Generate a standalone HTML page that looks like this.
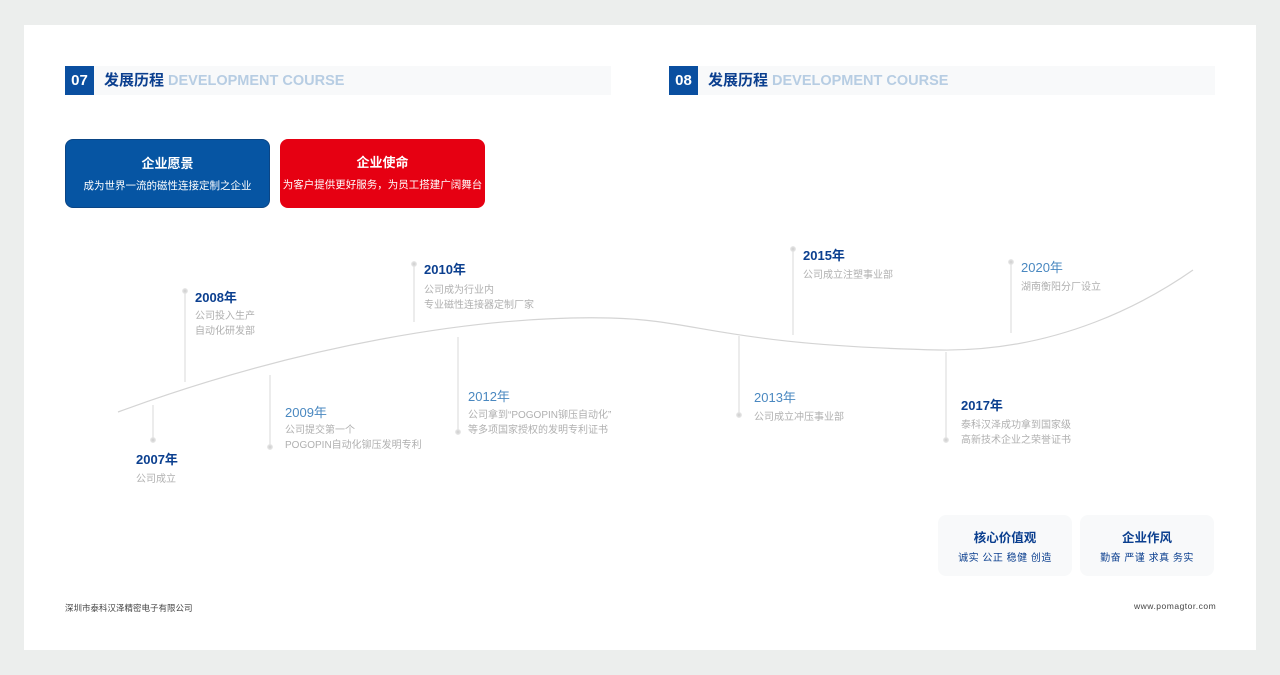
<!DOCTYPE html><html><head><meta charset="utf-8"><style>
body{margin:0;width:1280px;height:675px;background:#eceeed;font-family:"Liberation Sans","Noto Sans CJK SC",sans-serif;overflow:hidden}
.card{position:absolute;left:24px;top:25px;width:1232px;height:625px;background:#fff}
.a{position:absolute}
.hd{position:absolute;top:66px;height:29px;background:#f8f9fa;width:546px}
.num{position:absolute;left:0;top:0;width:29px;height:29px;background:#0a4fa0;color:#fff;font-weight:bold;font-size:15px;line-height:29px;text-align:center}
.ht{position:absolute;left:39px;top:0;line-height:29px;font-size:15px;font-weight:bold;color:#0b3f8f;white-space:nowrap}
.ht span{color:#b7cde3;font-size:14.5px;margin-left:4px}
.box{position:absolute;top:139px;width:205px;height:69px;border-radius:8px;color:#fff;text-align:center}
.box b{display:block;font-size:13px;margin-top:13px}
.box i{display:block;font-style:normal;font-size:10.5px;margin-top:6px}
.y{position:absolute;font-size:13px;font-weight:bold;color:#0b3f8f;white-space:nowrap}
.y.l{color:#4a88c0;font-weight:normal}
.d{position:absolute;font-size:10px;color:#b0b0b0;line-height:15px;white-space:nowrap;margin-top:3px}
.vb{position:absolute;top:515px;width:134px;height:61px;background:#f8f9fa;border-radius:8px;text-align:center;color:#0b3f8f}
.vb b{display:block;font-size:12.5px;margin-top:12px}
.vb i{display:block;font-style:normal;font-size:10px;margin-top:3px;letter-spacing:.5px}
</style></head><body>
<div class="card"></div>
<div class="hd" style="left:65px"><div class="num">07</div><div class="ht">发展历程<span>DEVELOPMENT COURSE</span></div></div>
<div class="hd" style="left:669px"><div class="num">08</div><div class="ht">发展历程<span>DEVELOPMENT COURSE</span></div></div>
<div class="box" style="left:65px;background:#0655a3;border:1px solid #0a4585;box-sizing:border-box"><b>企业愿景</b><i>成为世界一流的磁性连接定制之企业</i></div>
<div class="box" style="left:280px;background:#e60012"><b>企业使命</b><i>为客户提供更好服务，为员工搭建广阔舞台</i></div>
<svg class="a" style="left:0;top:0" width="1280" height="675">
<path d="M118,412 C300,345 480,315 610,318 C700,320 720,345 940,350 C1060,352 1150,300 1193,270" fill="none" stroke="#d4d4d4" stroke-width="1.2"/>
<g stroke="#e2e2e2" stroke-width="1.3" fill="#d4d4d4">
<line x1="153" y1="405" x2="153" y2="440"/><circle cx="153" cy="440" r="2.2"/>
<line x1="185" y1="291" x2="185" y2="382"/><circle cx="185" cy="291" r="2.2"/>
<line x1="270" y1="375" x2="270" y2="447"/><circle cx="270" cy="447" r="2.2"/>
<line x1="414" y1="264" x2="414" y2="322"/><circle cx="414" cy="264" r="2.2"/>
<line x1="458" y1="337" x2="458" y2="432"/><circle cx="458" cy="432" r="2.2"/>
<line x1="739" y1="336" x2="739" y2="415"/><circle cx="739" cy="415" r="2.2"/>
<line x1="793" y1="249" x2="793" y2="335"/><circle cx="793" cy="249" r="2.2"/>
<line x1="946" y1="352" x2="946" y2="440"/><circle cx="946" cy="440" r="2.2"/>
<line x1="1011" y1="262" x2="1011" y2="333"/><circle cx="1011" cy="262" r="2.2"/>
</g></svg>
<div class="y" style="left:136px;top:449px">2007年</div><div class="d" style="left:136px;top:469px">公司成立</div>
<div class="y" style="left:195px;top:287px">2008年</div><div class="d" style="left:195px;top:306px">公司投入生产<br>自动化研发部</div>
<div class="y l" style="left:285px;top:402px">2009年</div><div class="d" style="left:285px;top:420px">公司提交第一个<br>POGOPIN自动化铆压发明专利</div>
<div class="y" style="left:424px;top:259px">2010年</div><div class="d" style="left:424px;top:280px">公司成为行业内<br>专业磁性连接器定制厂家</div>
<div class="y l" style="left:468px;top:386px">2012年</div><div class="d" style="left:468px;top:405px">公司拿到“POGOPIN铆压自动化”<br>等多项国家授权的发明专利证书</div>
<div class="y l" style="left:754px;top:387px">2013年</div><div class="d" style="left:754px;top:407px">公司成立冲压事业部</div>
<div class="y" style="left:803px;top:245px">2015年</div><div class="d" style="left:803px;top:265px">公司成立注塑事业部</div>
<div class="y" style="left:961px;top:395px">2017年</div><div class="d" style="left:961px;top:415px">泰科汉泽成功拿到国家级<br>高新技术企业之荣誉证书</div>
<div class="y l" style="left:1021px;top:257px">2020年</div><div class="d" style="left:1021px;top:277px">湖南衡阳分厂设立</div>
<div class="vb" style="left:938px"><b>核心价值观</b><i>诚实 公正 稳健 创造</i></div>
<div class="vb" style="left:1080px"><b>企业作风</b><i>勤奋 严谨 求真 务实</i></div>
<div class="a" style="left:65px;top:602px;font-size:8.5px;color:#444">深圳市泰科汉泽精密电子有限公司</div>
<div class="a" style="left:1134px;top:601px;font-size:8.5px;color:#444;letter-spacing:.5px">www.pomagtor.com</div>
</body></html>
